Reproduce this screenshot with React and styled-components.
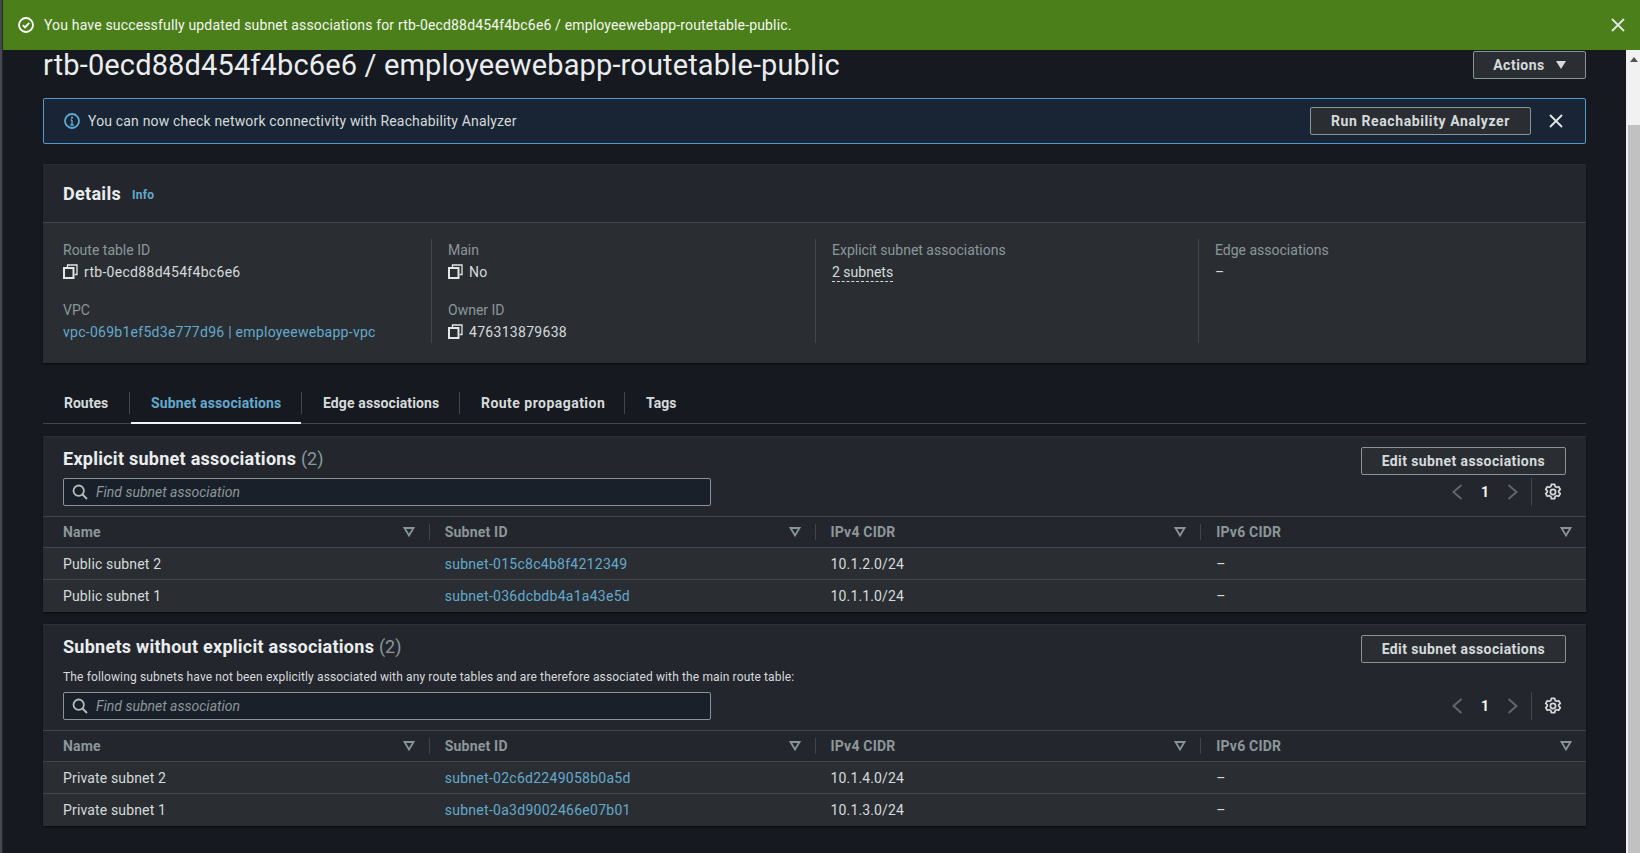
import React from "react";
import styled, { createGlobalStyle } from "styled-components";

const GlobalStyle = createGlobalStyle`
  html, body {
    margin: 0;
    height: 100%;
    overflow: hidden;
    background: #16191f;
  }
  * { box-sizing: border-box; }
`;

function CheckIcon() {
  return (
    <svg width="16" height="16" viewBox="0 0 16 16" fill="none" stroke="#fff" strokeWidth="1.8">
      <circle cx="8" cy="8" r="7" />
      <path d="M4.8 8.2l2.2 2.2 4.2-4.6" />
    </svg>
  );
}

function InfoIcon() {
  return (
    <svg width="16" height="16" viewBox="0 0 16 16" fill="none" stroke="#5fa8d3" strokeWidth="1.8">
      <circle cx="8" cy="8" r="7" />
      <path d="M8 7v5M6.5 7H8M6.2 12h3.6" strokeWidth="1.4" />
      <path d="M7 3.7h2v1.8H7z" fill="#5fa8d3" stroke="none" />
    </svg>
  );
}

function CloseIcon() {
  return (
    <svg width="14" height="14" viewBox="0 0 14 14" fill="none" stroke="#e3e6e6" strokeWidth="1.8">
      <path d="M1 1l12 12M13 1L1 13" />
    </svg>
  );
}

function CopyIcon() {
  return (
    <svg width="15" height="15" viewBox="0 0 15 15" fill="none" stroke="#e3e6e6">
      <path d="M4.5 3V1h9.5v9.5h-2.2" strokeWidth="1.3" />
      <rect x="1" y="4" width="9.5" height="10" strokeWidth="2" />
    </svg>
  );
}

function SearchIcon() {
  return (
    <svg width="16" height="16" viewBox="0 0 16 16" fill="none" stroke="#b4bcbc" strokeWidth="1.8">
      <circle cx="6.7" cy="6.7" r="5.2" />
      <path d="M10.5 10.5l4.5 4.5" />
    </svg>
  );
}

function SortCaret() {
  return (
    <svg width="12" height="10" viewBox="0 0 12 10" fill="none" stroke="#879596" strokeWidth="1.8">
      <path d="M1.5 1h9L6 8.5z" />
    </svg>
  );
}

function Chevron({ flip }) {
  return (
    <svg width="11" height="16" viewBox="0 0 11 16" fill="none" stroke="#5f6670" strokeWidth="2">
      <path d={flip ? "M1.5 1l8 7-8 7" : "M9.5 1l-8 7 8 7"} />
    </svg>
  );
}

function GearIcon() {
  return (
    <svg width="18" height="18" viewBox="0 0 18 18" fill="none" stroke="#d5dbdb" strokeWidth="1.7" strokeLinejoin="round">
      <circle cx="9" cy="9" r="2.6" />
      <path d="M7.4 1.3h3.2l.5 2.1 1.5.9 2.1-.6 1.6 2.7-1.6 1.5v1.2l1.6 1.5-1.6 2.7-2.1-.6-1.5.9-.5 2.1H7.4l-.5-2.1-1.5-.9-2.1.6-1.6-2.7 1.6-1.5V7.9L1.7 6.4l1.6-2.7 2.1.6 1.5-.9z" />
    </svg>
  );
}

const Copyable = ({ children }) => (
  <CopyValue>
    <CopyIcon />
    {children}
  </CopyValue>
);

function SubnetSection({ title, description, rows }) {
  return (
    <Section>
      <SectionHead>
        <SectionLeft>
          <SectionTitle>
            {title} <Count>(2)</Count>
          </SectionTitle>
          {description && <Description>{description}</Description>}
          <SearchBox>
            <SearchIcon />
            <Placeholder>Find subnet association</Placeholder>
          </SearchBox>
        </SectionLeft>
        <SectionRight>
          <Button>Edit subnet associations</Button>
          <Pager>
            <Chevron />
            <PageNumber>1</PageNumber>
            <Chevron flip />
            <PagerSep />
            <GearIcon />
          </Pager>
        </SectionRight>
      </SectionHead>
      <HeadRow>
        {["Name", "Subnet ID", "IPv4 CIDR", "IPv6 CIDR"].map((name, i) => (
          <HeadCell key={name} $first={i === 0}>
            {name}
            <SortCaret />
          </HeadCell>
        ))}
      </HeadRow>
      {rows.map((row) => (
        <Row key={row.id}>
          <Cell $first>{row.name}</Cell>
          <Cell>
            <SubnetLink>{row.id}</SubnetLink>
          </Cell>
          <Cell>{row.cidr}</Cell>
          <Cell>–</Cell>
        </Row>
      ))}
    </Section>
  );
}

const publicRows = [
  { name: "Public subnet 2", id: "subnet-015c8c4b8f4212349", cidr: "10.1.2.0/24" },
  { name: "Public subnet 1", id: "subnet-036dcbdb4a1a43e5d", cidr: "10.1.1.0/24" },
];

const privateRows = [
  { name: "Private subnet 2", id: "subnet-02c6d2249058b0a5d", cidr: "10.1.4.0/24" },
  { name: "Private subnet 1", id: "subnet-0a3d9002466e07b01", cidr: "10.1.3.0/24" },
];

export default function App() {
  return (
    <Page>
      <GlobalStyle />
      <LeftEdge />
      <Content>
        <Flash>
          <CheckIcon />
          <FlashText>
            You have successfully updated subnet associations for rtb-0ecd88d454f4bc6e6 / employeewebapp-routetable-public.
          </FlashText>
          <CloseIcon />
        </Flash>
        <Body>
          <Main>
            <TitleRow>
              <Title>rtb-0ecd88d454f4bc6e6 / employeewebapp-routetable-public</Title>
              <ActionsButton>
                Actions
                <ActionsCaret />
              </ActionsButton>
            </TitleRow>

            <Notice>
              <InfoIcon />
              <NoticeText>You can now check network connectivity with Reachability Analyzer</NoticeText>
              <NoticeButton>Run Reachability Analyzer</NoticeButton>
              <CloseIcon />
            </Notice>

            <Details>
              <DetailsHead>
                <DetailsTitle>Details</DetailsTitle>
                <InfoLink>Info</InfoLink>
              </DetailsHead>
              <DetailsGrid>
                <DetailsCol>
                  <Field>
                    <Label>Route table ID</Label>
                    <Copyable>rtb-0ecd88d454f4bc6e6</Copyable>
                  </Field>
                  <Field>
                    <Label>VPC</Label>
                    <Value>
                      <SubnetLink>vpc-069b1ef5d3e777d96 | employeewebapp-vpc</SubnetLink>
                    </Value>
                  </Field>
                </DetailsCol>
                <DetailsCol $sep>
                  <Field>
                    <Label>Main</Label>
                    <Copyable>No</Copyable>
                  </Field>
                  <Field>
                    <Label>Owner ID</Label>
                    <Copyable>476313879638</Copyable>
                  </Field>
                </DetailsCol>
                <DetailsCol $sep>
                  <Field>
                    <Label>Explicit subnet associations</Label>
                    <Value>
                      <Dashed>2 subnets</Dashed>
                    </Value>
                  </Field>
                </DetailsCol>
                <DetailsCol $sep>
                  <Field>
                    <Label>Edge associations</Label>
                    <Value>–</Value>
                  </Field>
                </DetailsCol>
              </DetailsGrid>
            </Details>

            <Tabs>
              <Tab $width="87px">Routes</Tab>
              <Tab $width="172px" $spacing="0.15px" $active>
                Subnet associations
              </Tab>
              <Tab $width="158px" $spacing="0.12px">
                Edge associations
              </Tab>
              <Tab $width="165px" $spacing="0.47px">
                Route propagation
              </Tab>
              <Tab $last>Tags</Tab>
            </Tabs>

            <SubnetSection title="Explicit subnet associations" rows={publicRows} />
            <SubnetSection
              title="Subnets without explicit associations"
              description="The following subnets have not been explicitly associated with any route tables and are therefore associated with the main route table:"
              rows={privateRows}
            />
          </Main>
          <Scrollbar>
            <ScrollArrow />
            <ScrollThumb />
          </Scrollbar>
        </Body>
      </Content>
    </Page>
  );
}

const Page = styled.div`
  display: flex;
  height: 853px;
  font-family: Roboto, "Liberation Sans", sans-serif;
  font-size: 14px;
  color: #d5dbdb;
  background: #16191f;
  overflow: hidden;
`;

const LeftEdge = styled.div`
  width: 3px;
  flex-shrink: 0;
  background: #45484c;
  border-right: 1px solid #26282c;
`;

const Content = styled.div`
  flex: 1;
  min-width: 0;
  display: flex;
  flex-direction: column;
`;

const Flash = styled.div`
  height: 50px;
  flex-shrink: 0;
  display: flex;
  align-items: center;
  gap: 10px;
  padding: 0 15px;
  background: #4b7f1a;
`;

const FlashText = styled.div`
  flex: 1;
  color: #f4f6f2;
  letter-spacing: 0.16px;
`;

const Body = styled.div`
  flex: 1;
  min-height: 0;
  display: flex;
`;

const Main = styled.div`
  flex: 1;
  min-width: 0;
  padding: 0 40px 0 40px;
`;

const TitleRow = styled.div`
  height: 48px;
  display: flex;
  justify-content: space-between;
  align-items: flex-start;
`;

const Title = styled.h1`
  margin: 0;
  font-size: 29px;
  font-weight: 400;
  line-height: 30px;
  color: #eaeded;
  letter-spacing: 0.14px;
`;

const Button = styled.div`
  height: 28px;
  display: flex;
  align-items: center;
  justify-content: center;
  padding: 0 20px;
  background: #2a2e33;
  border: 1px solid #879596;
  border-radius: 2px;
  font-weight: 700;
  color: #d5dbdb;
  letter-spacing: 0.4px;
`;

const NoticeButton = styled(Button)`
  letter-spacing: 0.6px;
`;

const ActionsButton = styled(Button)`
  width: 113px;
  margin-top: 1px;
  gap: 11px;
  letter-spacing: 0.5px;
`;

const ActionsCaret = styled.span`
  width: 0;
  height: 0;
  border-left: 5.5px solid transparent;
  border-right: 5.5px solid transparent;
  border-top: 8px solid #d5dbdb;
`;

const Notice = styled.div`
  height: 46px;
  display: flex;
  align-items: center;
  gap: 18px;
  padding: 0 22px 0 20px;
  background: #192534;
  border: 1px solid #5299d0;
  border-radius: 2px;
`;

const NoticeText = styled.div`
  flex: 1;
  margin-left: -10px;
  letter-spacing: 0.17px;
`;

const Details = styled.section`
  margin-top: 20px;
  background: #2a2e33;
  border-top: 1px solid #292c33;
  box-shadow: 0 1px 2px rgba(0, 0, 0, 0.6);
`;

const DetailsHead = styled.header`
  height: 58px;
  display: flex;
  align-items: center;
  gap: 11px;
  padding-left: 20px;
  background: #24262e;
  border-bottom: 1px solid #41454d;
`;

const DetailsTitle = styled.h2`
  margin: 0;
  font-size: 18px;
  font-weight: 700;
  color: #eaeded;
  letter-spacing: 0.3px;
`;

const InfoLink = styled.span`
  margin-top: 3px;
  font-size: 12px;
  font-weight: 700;
  color: #63a9cc;
  letter-spacing: 0.2px;
`;

const DetailsGrid = styled.div`
  display: grid;
  grid-template-columns: 368px 384px 383px 1fr;
  padding: 16px 20px 20px;
`;

const DetailsCol = styled.div`
  display: flex;
  flex-direction: column;
  gap: 16px;
  min-height: 104px;
  padding-left: ${(p) => (p.$sep ? "16px" : "0")};
  border-left: ${(p) => (p.$sep ? "1px solid #41454d" : "none")};
`;

const Field = styled.div``;

const Label = styled.div`
  line-height: 22px;
  color: #8b9799;
`;

const Value = styled.div`
  line-height: 22px;
  color: #d5dbdb;
  letter-spacing: 0.3px;
`;

const CopyValue = styled(Value)`
  display: flex;
  align-items: center;
  gap: 6px;

  svg {
    margin-top: -2px;
  }
`;

const Dashed = styled.span`
  border-bottom: 1px dashed #d5dbdb;
  padding-bottom: 1px;
  letter-spacing: 0;
`;

const Tabs = styled.nav`
  display: flex;
  margin-top: 19px;
  padding: 10px 0 9px;
  border-bottom: 1px solid #41454d;
`;

const Tab = styled.div`
  position: relative;
  width: ${(p) => p.$width || "auto"};
  height: 22px;
  line-height: 22px;
  padding-left: 21px;
  font-weight: 700;
  white-space: nowrap;
  letter-spacing: ${(p) => p.$spacing || "0"};
  color: ${(p) => (p.$active ? "#63a9cc" : "#d5dbdb")};
  border-right: ${(p) => (p.$last ? "none" : "1px solid #41454d")};

  ${(p) =>
    p.$active &&
    `
    &::after {
      content: "";
      position: absolute;
      left: 1px;
      right: 0;
      bottom: -10px;
      height: 2px;
      background: #f2f3f3;
    }
  `}
`;

const Section = styled.section`
  margin-top: 12px;
  background: #2a2e33;
  border-top: 1px solid #2d3038;
  box-shadow: 0 1px 2px rgba(0, 0, 0, 0.6);
`;

const SectionHead = styled.header`
  display: flex;
  justify-content: space-between;
  padding: 10px 20px 10px;
  background: #24262e;
  border-bottom: 1px solid #41454d;
`;

const SectionLeft = styled.div`
  display: flex;
  flex-direction: column;
`;

const SectionRight = styled.div`
  display: flex;
  flex-direction: column;
  justify-content: space-between;
  align-items: flex-end;
  gap: 3px;
`;

const SectionTitle = styled.h2`
  margin: 0 0 7px;
  font-size: 18px;
  line-height: 24px;
  font-weight: 700;
  color: #eaeded;
  letter-spacing: 0.26px;
`;

const Count = styled.span`
  font-weight: 400;
  color: #8b9799;
  letter-spacing: 0;
`;

const Description = styled.p`
  margin: 1px 0 5px;
  font-size: 12px;
  line-height: 20px;
  color: #d5dbdb;
  letter-spacing: 0.13px;
  white-space: nowrap;
`;

const SearchBox = styled.div`
  width: 648px;
  height: 28px;
  display: flex;
  align-items: center;
  gap: 8px;
  padding-left: 8px;
  background: #1a2029;
  border: 1px solid #879596;
  border-radius: 2px;
`;

const Placeholder = styled.span`
  font-style: italic;
  color: #8b9799;
`;

const Pager = styled.div`
  height: 28px;
  display: flex;
  align-items: center;
  padding-right: 4px;
`;

const PageNumber = styled.span`
  width: 44px;
  text-align: center;
  font-weight: 700;
  color: #f2f3f3;
`;

const PagerSep = styled.span`
  width: 1px;
  height: 28px;
  margin: 0 12px 0 13px;
  background: #41454d;
`;

const grid = `
  display: grid;
  grid-template-columns: repeat(4, 1fr);
`;

const HeadRow = styled.div`
  ${grid}
  height: 31px;
  background: #24262e;
  border-bottom: 1px solid #41454d;
`;

const HeadCell = styled.div`
  display: flex;
  align-items: center;
  justify-content: space-between;
  height: 16px;
  align-self: center;
  padding: 0 14px 0 ${(p) => (p.$first ? "20px" : "15px")};
  border-left: ${(p) => (p.$first ? "none" : "1px solid #41454d")};
  font-weight: 700;
  color: #8b9799;
  letter-spacing: 0.2px;
`;

const Row = styled.div`
  ${grid}
  height: 32px;
  background: #2a2e33;
  border-bottom: 1px solid #41454d;

  &:last-child {
    border-bottom: none;
  }
`;

const Cell = styled.div`
  display: flex;
  align-items: center;
  padding-left: ${(p) => (p.$first ? "20px" : "16px")};
  color: #d5dbdb;
  letter-spacing: 0.15px;
`;

const SubnetLink = styled.span`
  color: #63a9cc;
  letter-spacing: 0.27px;
`;

const Scrollbar = styled.div`
  width: 14px;
  flex-shrink: 0;
  display: flex;
  flex-direction: column;
  align-items: center;
  padding-left: 2px;
  background: #f1f1f1;
`;

const ScrollArrow = styled.span`
  width: 0;
  height: 0;
  margin-top: 7px;
  border-left: 4px solid transparent;
  border-right: 4px solid transparent;
  border-bottom: 5px solid #505050;
`;

const ScrollThumb = styled.div`
  width: 12px;
  flex: 1;
  margin-top: 63px;
  background: #c1c1c1;
`;
